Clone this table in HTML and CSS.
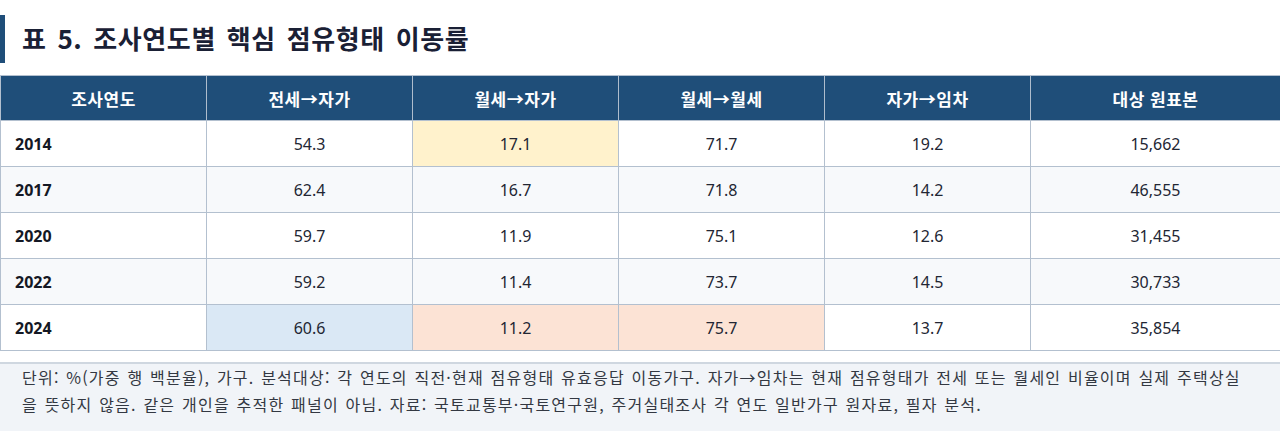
FILE: index.html
```html
<!DOCTYPE html>
<html lang="ko">
<head>
<meta charset="utf-8">
<link rel="stylesheet" href="styles.css">
</head>
<body>
<h1 class="title">표 5. 조사연도별 핵심 점유형태 이동률</h1>
<table class="data">
  <colgroup>
    <col class="c"><col class="c"><col class="c"><col class="c"><col class="c"><col class="last">
  </colgroup>
  <thead>
    <tr><th>조사연도</th><th>전세→자가</th><th>월세→자가</th><th>월세→월세</th><th>자가→임차</th><th>대상 원표본</th></tr>
  </thead>
  <tbody>
    <tr><td class="year">2014</td><td>54.3</td><td class="hl-yellow">17.1</td><td>71.7</td><td>19.2</td><td>15,662</td></tr>
    <tr><td class="year">2017</td><td>62.4</td><td>16.7</td><td>71.8</td><td>14.2</td><td>46,555</td></tr>
    <tr><td class="year">2020</td><td>59.7</td><td>11.9</td><td>75.1</td><td>12.6</td><td>31,455</td></tr>
    <tr><td class="year">2022</td><td>59.2</td><td>11.4</td><td>73.7</td><td>14.5</td><td>30,733</td></tr>
    <tr><td class="year">2024</td><td class="hl-blue">60.6</td><td class="hl-peach">11.2</td><td class="hl-peach">75.7</td><td>13.7</td><td>35,854</td></tr>
  </tbody>
</table>
<div class="note">단위: %(가중 행 백분율), 가구. 분석대상: 각 연도의 직전·현재 점유형태 유효응답 이동가구. 자가→임차는 현재 점유형태가 전세 또는 월세인 비율이며 실제 주택상실을 뜻하지 않음. 같은 개인을 추적한 패널이 아님. 자료: 국토교통부·국토연구원, 주거실태조사 각 연도 일반가구 원자료, 필자 분석.</div>
</body>
</html>
```
FILE: styles.css
```css
html, body {
  margin: 0;
  padding: 0;
  background: #ffffff;
}
body {
  width: 1280px;
  font-family: "Noto Sans CJK KR", "Noto Sans", sans-serif;
  color: #1a1f2b;
}
.title {
  margin: 15px 0 0 0;
  height: 48px;
  box-sizing: border-box;
  border-left: 5px solid #1f4e79;
  padding-left: 17px;
  font-size: 26px;
  font-weight: 700;
  line-height: 46px;
  color: #1a2035;
  letter-spacing: 0.6px;
  word-spacing: 3px;
}
.data {
  margin-top: 12px;
  width: 1280px;
  border-collapse: separate;
  border-spacing: 0;
  border-top: 1px solid #b3c0cf;
  border-left: 1px solid #b3c0cf;
  table-layout: fixed;
  font-size: 16px;
}
.data col.c { width: 206px; }
.data col.last { width: 250px; }
.data th,
.data td {
  box-sizing: border-box;
  padding: 0;
  border-right: 1px solid #b3c0cf;
  border-bottom: 1px solid #b3c0cf;
  text-align: center;
}
.data th {
  background: #1f4e79;
  color: #ffffff;
  font-size: 17px;
  font-weight: 700;
  letter-spacing: 0.5px;
  height: 45px;
  border-right-color: #aebdcd;
}
.data td {
  height: 46px;
  color: #222633;
  font-family: "Noto Sans", "Noto Sans CJK KR", sans-serif;
}
.data tbody tr:nth-child(even) td { background: #f7f9fb; }
.data td.year {
  text-align: left;
  padding-left: 14px;
  font-weight: 700;
  color: #141824;
}
.data td.hl-yellow { background: #fff2cc; }
.data td.hl-blue { background: #dae8f5; }
.data td.hl-peach { background: #fce3d5; }
.note {
  margin-top: 11px;
  border-top: 2px solid #cfd7e0;
  background: #f1f4f8;
  padding: 0 30px 22px 22px;
  font-size: 16px;
  line-height: 27px;
  letter-spacing: 1.22px;
  word-spacing: 1px;
  color: #333842;
}
```
